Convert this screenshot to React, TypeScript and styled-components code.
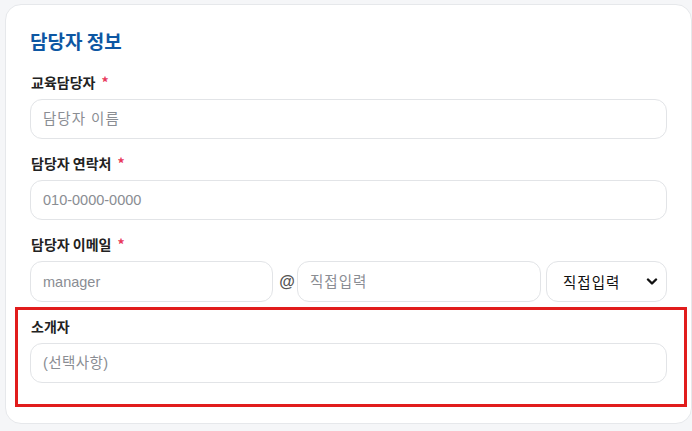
import React from "react";
import styled, { createGlobalStyle } from "styled-components";

const Global = createGlobalStyle`
  html, body { margin: 0; padding: 0; background: #f5f6f8; }
  body {
    font-family: "Liberation Sans", "Noto Sans CJK KR", sans-serif;
    overflow: hidden;
  }
  * { box-sizing: border-box; }
`;

const Page = styled.div`
  padding: 4px 0 0 5px;
  width: 692px;
  height: 431px;
`;

const Card = styled.section`
  width: 687px;
  background: #ffffff;
  border: 1px solid #e6e8eb;
  border-radius: 16px;
  padding: 23px 24px 16px 24px;
`;

const Title = styled.h2`
  margin: 0 0 18px 0;
  font-family: "Noto Sans CJK KR", sans-serif;
  font-size: 19px;
  line-height: 26px;
  font-weight: 700;
  color: #0d57a3;
`;

const Field = styled.div`
  display: flex;
  flex-direction: column;
  margin-bottom: 14px;
`;

const Highlight = styled.div`
  margin: 5px -20px 0 -15px;
  border: 3px solid #e11c1c;
  padding: 6px 17px 21px 12px;
  display: flex;
  flex-direction: column;
`;

const Label = styled.label`
  font-family: "Noto Sans CJK KR", sans-serif;
  font-size: 14px;
  line-height: 20px;
  font-weight: 700;
  color: #222222;
  margin-bottom: 7px;
  padding-left: 1px;
`;

const Req = styled.span`
  color: #e8375a;
  margin-left: 6px;
`;

const Input = styled.input<{ $h?: number; $ls?: number }>`
  width: 100%;
  height: ${(p) => p.$h ?? 40}px;
  border: 1px solid #e2e4e7;
  border-radius: 12px;
  padding: 0 12px;
  font-family: "Liberation Sans", "Noto Sans CJK KR", sans-serif;
  font-size: 14.5px;
  letter-spacing: ${(p) => p.$ls ?? 0}px;
  color: #222;
  background: #fff;
  outline: none;
  &::placeholder { color: #8a8d93; }
`;

const EmailRow = styled.div`
  display: grid;
  grid-template-columns: 243px 24px 244px 121px;
  align-items: center;
`;

const Cell = styled.div<{ $ml?: number }>`
  margin-left: ${(p) => p.$ml ?? 0}px;
  position: relative;
`;

const At = styled.span`
  font-family: "Liberation Sans", sans-serif;
  font-size: 16px;
  font-weight: 700;
  color: #555;
  text-align: center;
  margin-left: 4px;
`;

const Select = styled.select`
  width: 121px;
  height: 41px;
  appearance: none;
  -webkit-appearance: none;
  border: 1px solid #e2e4e7;
  border-radius: 12px;
  padding: 0 0 0 16px;
  font-family: "Noto Sans CJK KR", sans-serif;
  font-size: 14.5px;
  letter-spacing: 1px;
  color: #111;
  background: #fff;
  outline: none;
`;

const Chevron = styled.svg`
  position: absolute;
  right: 4px;
  top: 17px;
  pointer-events: none;
`;

export default function App() {
  return (
    <Page>
      <Global />
      <Card>
        <Title>담당자 정보</Title>
        <Field>
          <Label>
            교육담당자<Req>*</Req>
          </Label>
          <Input $ls={1} placeholder="담당자 이름" />
        </Field>
        <Field>
          <Label>
            담당자 연락처<Req>*</Req>
          </Label>
          <Input placeholder="010-0000-0000" />
        </Field>
        <Field style={{ marginBottom: 0 }}>
          <Label>
            담당자 이메일<Req>*</Req>
          </Label>
          <EmailRow>
            <Cell>
              <Input $h={41} placeholder="manager" />
            </Cell>
            <At>@</At>
            <Cell>
              <Input $h={41} $ls={1} placeholder="직접입력" />
            </Cell>
            <Cell $ml={5}>
              <Select defaultValue="direct">
                <option value="direct">직접입력</option>
                <option value="naver">naver.com</option>
                <option value="gmail">gmail.com</option>
              </Select>
              <Chevron width="12" height="8" viewBox="0 0 12 8">
                <path d="M2 1.5 L6 5.5 L10 1.5" fill="none" stroke="#111" strokeWidth="2.4" strokeLinecap="round" strokeLinejoin="round" />
              </Chevron>
            </Cell>
          </EmailRow>
        </Field>
        <Highlight>
          <Label>소개자</Label>
          <Input $ls={0.4} placeholder="(선택사항)" />
        </Highlight>
      </Card>
    </Page>
  );
}
